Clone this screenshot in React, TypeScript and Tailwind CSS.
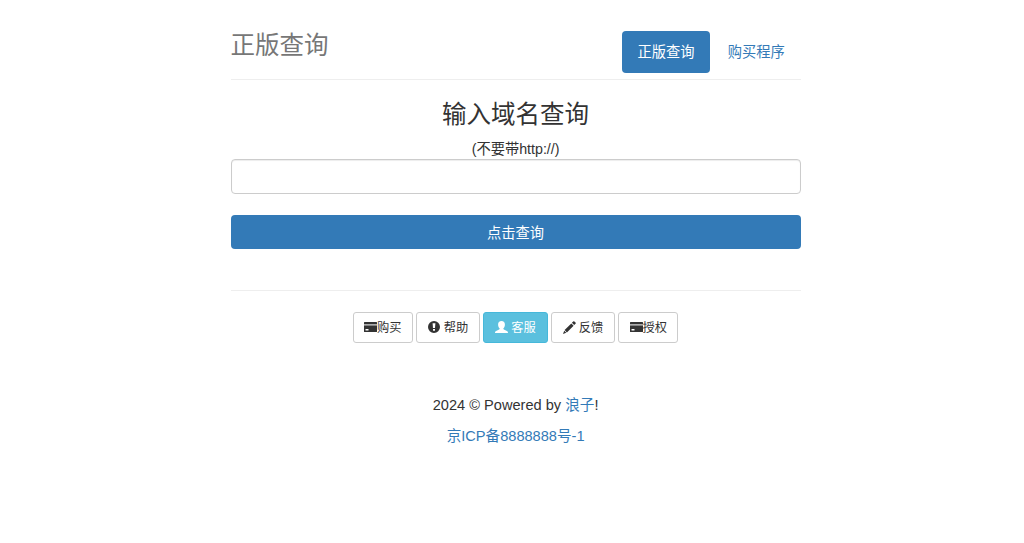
import type { ReactNode } from 'react';
import clsx from 'clsx';

function CardIcon() {
  return (
    <svg viewBox="0 0 13 10" className="w-[13px] h-[10px] shrink-0 -mt-0.5" fill="currentColor">
      <path fillRule="evenodd" d="M.6 0h11.8q.6 0 .6.6V2H0V.6Q0 0 .6 0ZM0 3.500h13v5.900q0 .6-.6.600H.6Q0 10 0 9.400ZM1.500 7v1.500h3V7Z" />
      <path opacity=".4" d="M0 2h13v1.500H0Z" />
    </svg>
  );
}

function AlertIcon() {
  return (
    <svg viewBox="0 0 12 12" className="w-3 h-3 shrink-0 mr-1 -mt-0.5" fill="currentColor">
      <path fillRule="evenodd" d="M6 0a6 6 0 1 1 0 12A6 6 0 0 1 6 0ZM4.600 2.200 5 6.900h2l.4-4.700ZM5 8v1.800h2V8Z" />
    </svg>
  );
}

function UserIcon() {
  return (
    <svg viewBox="0 0 13 12" className="w-[13px] h-3 shrink-0 mr-[3px] -mt-0.5" fill="currentColor">
      <path d="M6.500 0C8.700 0 9.900 1.300 9.900 3.400c0 1.700-.6 3-1.500 3.900-.2.600 0 1 .5 1.300l3 1.300c.7.300 1.100.8 1.100 2.100H0c0-1.300.400-1.800 1.100-2.100l3-1.300c.5-.3.700-.7.500-1.300C3.700 6.400 3.100 5.100 3.100 3.400 3.100 1.300 4.300 0 6.500 0Z" />
    </svg>
  );
}

function PencilIcon() {
  return (
    <svg viewBox="0 0 13 13" className="w-[13px] h-[13px] shrink-0 mr-[3px] -mt-px" fill="currentColor">
      <path d="M10.200.5q.6-.6 1.200 0l1.100 1.100q.6.6 0 1.200l-1.300 1.300-2.300-2.300ZM8.300 2.400l2.300 2.300-6.700 6.700-2.300-2.300ZM1.200 9.700l2.100 2.100L0 13Z" />
    </svg>
  );
}

const actions: { label: string; icon: ReactNode; width: string; info?: boolean }[] = [
  { label: '购买', icon: <CardIcon />, width: 'w-[60px]' },
  { label: '帮助', icon: <AlertIcon />, width: 'w-[63.5px]' },
  { label: '客服', icon: <UserIcon />, width: 'w-[64.5px]', info: true },
  { label: '反馈', icon: <PencilIcon />, width: 'w-[63.5px]' },
  { label: '授权', icon: <CardIcon />, width: 'w-[60px]' },
];

export default function App() {
  return (
    <div className="min-h-screen bg-white text-[#333] text-[14.25px] leading-5 font-['Liberation_Sans','Noto_Sans_CJK_SC',sans-serif]">
      <div className="w-[570px] ml-[230.6px] pt-[31px]">
        <header className="flex justify-between h-[49px] border-b border-[#eeeeee]">
          <h3 className="text-[24.5px] leading-[30px] text-[#777]">正版查询</h3>
          <nav className="flex gap-[2px]">
            <a href="#" className="flex items-center justify-center w-[88px] h-[41.5px] rounded bg-[#337ab7] text-white">正版查询</a>
            <a href="#" className="flex items-center justify-center w-[88.5px] h-[41.5px] text-[#337ab7]">购买程序</a>
          </nav>
        </header>

        <main className="text-center">
          <h3 className="mt-[21px] h-[27px] text-[24.5px] leading-[28px]">输入域名查询</h3>
          <p className="mt-[10px] h-[21px] leading-[22px]">(不要带http://)</p>
          <input
            type="text"
            className="block w-full h-[35px] px-3 rounded border border-[#ccc] bg-white shadow-[inset_0_1px_1px_rgba(0,0,0,0.075)] outline-none"
          />
          <button className="block w-full h-[34px] mt-[21px] pt-px rounded bg-[#337ab7] text-white">
            点击查询
          </button>
          <hr className="mt-[41px] border-[#eeeeee]" />
          <div className="flex justify-center gap-[3.5px] mt-[21px] text-[12.25px]">
            {actions.map(({ label, icon, width, info }) => (
              <button
                key={label}
                className={clsx(
                  'flex items-center justify-center h-[31px] rounded-[3px] border',
                  width,
                  info ? 'border-[#46b8da] bg-[#5bc0de] text-white' : 'border-[#ccc] bg-white',
                )}
              >
                {icon}
                {label}
              </button>
            ))}
          </div>
        </main>

        <footer className="mt-[52px] text-center text-[14.6px]">
          <p className="h-5">
            2024 © Powered by <a href="#" className="text-[#337ab7]">浪子</a>!
          </p>
          <p className="mt-[11px] h-5">
            <a href="#" className="text-[#337ab7]">京ICP备8888888号-1</a>
          </p>
        </footer>
      </div>
    </div>
  );
}
